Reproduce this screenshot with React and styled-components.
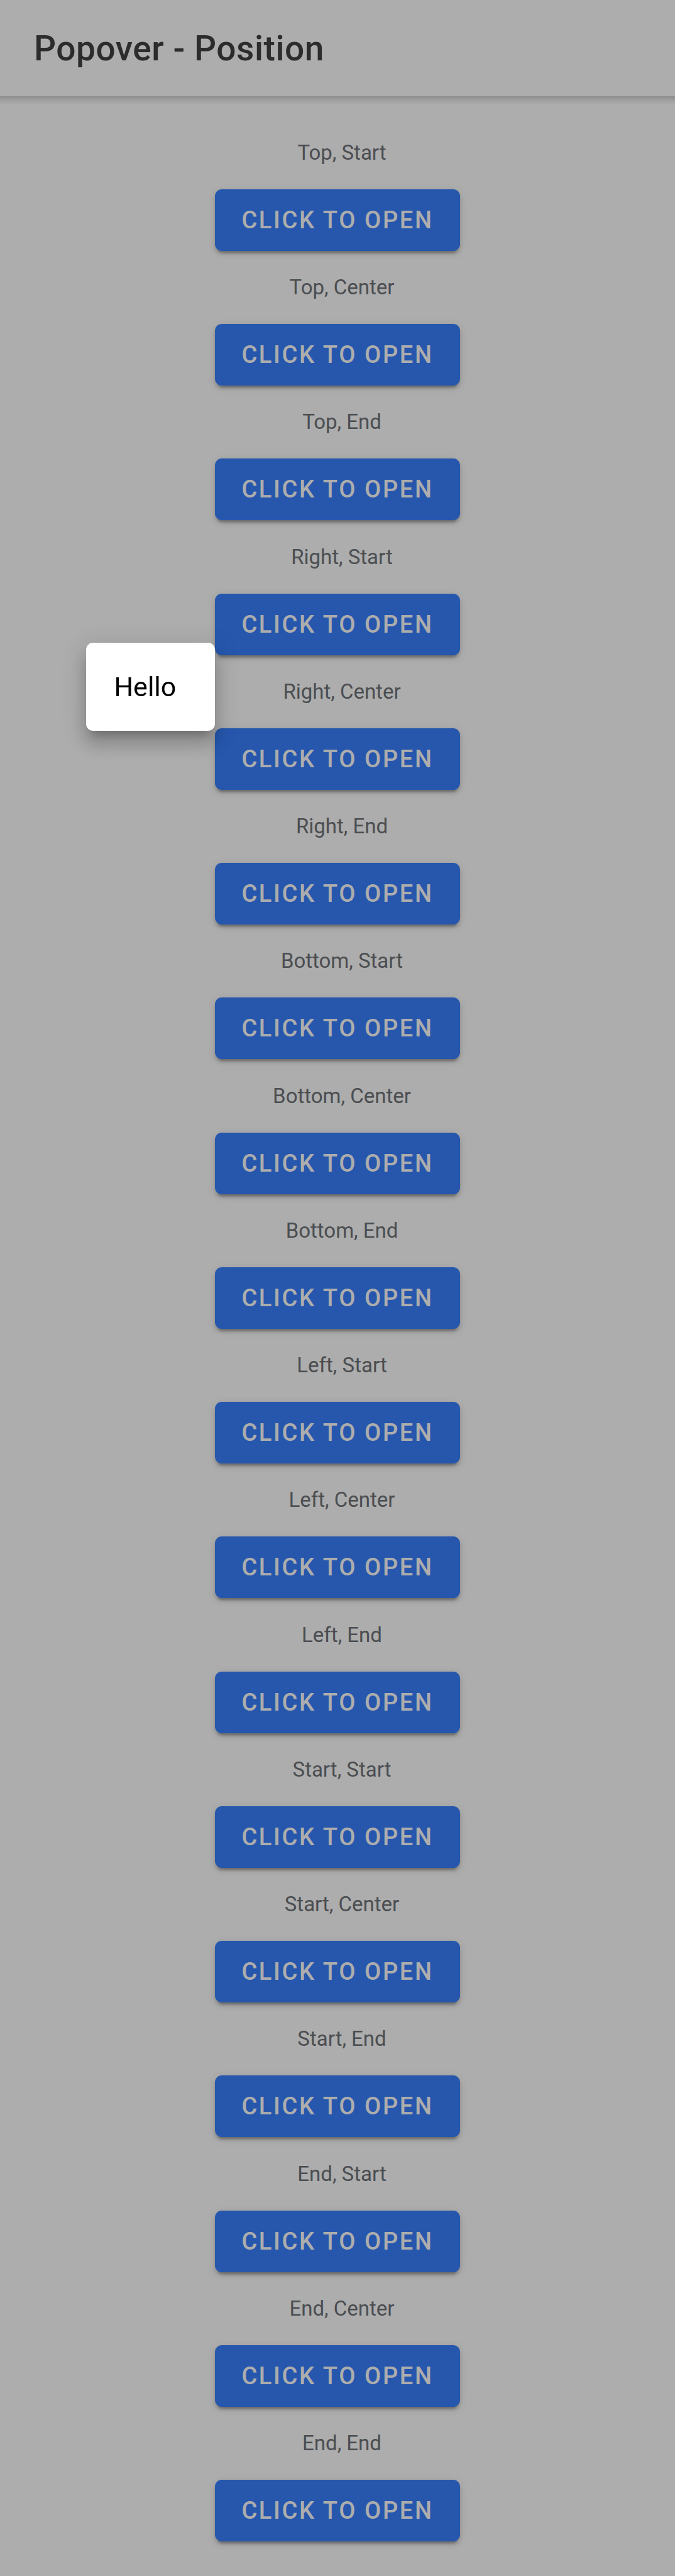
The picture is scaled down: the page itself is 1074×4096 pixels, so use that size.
import React from "react";
import styled, { createGlobalStyle } from "styled-components";

const GlobalStyle = createGlobalStyle`
  * { box-sizing: border-box; }
  body { margin: 0; background: #fff; font-family: Roboto, "Liberation Sans", sans-serif; }
`;

const Page = styled.div`
  display: flex;
  flex-direction: column;
  min-height: 100vh;
`;

const Header = styled.header`
  display: flex;
  align-items: center;
  height: 153px;
  padding: 0 54px;
`;

const HeaderShadow = styled.div`
  height: 14px;
  background: linear-gradient(to bottom, rgba(0, 0, 0, 0.18), rgba(0, 0, 0, 0.08) 45%, rgba(0, 0, 0, 0));
`;

const Title = styled.h1`
  margin: 0;
  color: #424242;
  font-size: 55px;
  font-weight: 500;
  line-height: 64px;
  letter-spacing: 0.01em;
`;

const List = styled.main`
  flex: 1;
  display: flex;
  flex-direction: column;
  justify-content: space-between;
  align-items: center;
  padding: 57px 0 55px;
`;

const Item = styled.section`
  display: flex;
  flex-direction: column;
  align-items: center;
  gap: 39px;
`;

const Label = styled.h2`
  margin: 0;
  padding-left: 14px;
  color: #6f7378;
  font-size: 33px;
  font-weight: 400;
  line-height: 38px;
`;

const Anchor = styled.div`
  position: relative;
`;

const OpenButton = styled.button`
  display: block;
  height: 98px;
  padding: 0 42px;
  border: 0;
  border-radius: 11px;
  background: #3880ff;
  color: #fff;
  font-family: inherit;
  font-size: 38px;
  font-weight: 500;
  line-height: 38px;
  letter-spacing: 0.07em;
  text-transform: uppercase;
  box-shadow: 0 8px 3px -5px rgba(0, 0, 0, 0.2), 0 5px 5px 0 rgba(0, 0, 0, 0.14), 0 3px 14px 0 rgba(0, 0, 0, 0.12);
  cursor: pointer;
`;

const Backdrop = styled.div`
  position: fixed;
  inset: 0;
  z-index: 1;
  background: rgba(0, 0, 0, 0.32);
`;

const PopoverBox = styled.div`
  position: absolute;
  z-index: 2;
  top: 78px;
  right: 100%;
  width: 205px;
  padding: 44px;
  border-radius: 11px;
  background: #fff;
  color: #000;
  font-size: 43px;
  line-height: 52px;
  box-shadow: 0 14px 14px -8px rgba(0, 0, 0, 0.2), 0 22px 27px 3px rgba(0, 0, 0, 0.14), 0 8px 38px 5px rgba(0, 0, 0, 0.12);
`;

const sides = ["Top", "Right", "Bottom", "Left", "Start", "End"];
const alignments = ["Start", "Center", "End"];
const positions = sides.flatMap((side) => alignments.map((alignment) => `${side}, ${alignment}`));
const openPosition = "Right, Start";

export default function App() {
  return (
    <>
      <GlobalStyle />
      <Page>
        <Header>
          <Title>Popover - Position</Title>
        </Header>
        <HeaderShadow />
        <List>
          {positions.map((position) => (
            <Item key={position}>
              <Label>{position}</Label>
              <Anchor>
                <OpenButton type="button">Click to Open</OpenButton>
                {position === openPosition && <PopoverBox role="dialog" aria-label={position}>Hello</PopoverBox>}
              </Anchor>
            </Item>
          ))}
        </List>
      </Page>
      <Backdrop />
    </>
  );
}
